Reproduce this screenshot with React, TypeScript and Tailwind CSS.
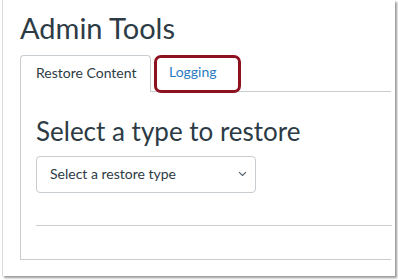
import React from "react";

export default function App() {
  return (
    <div className="w-[398px] h-[280px] bg-white font-['Lato','Noto_Sans',sans-serif] text-[#2d3b45]">
      <div className="ml-[2px] w-[393px] h-[276px] border-l border-[#dadada] bg-white overflow-hidden shadow-[2px_2px_2px_rgba(0,0,0,0.4)]">
        <div className="pl-[17px] pt-[11px]">
          <h1 className="text-[29px] leading-[1.2] font-normal">Admin Tools</h1>
          <div className="mt-[9px] relative flex w-[371px] h-[37px]">
            <div className="w-[131px] h-[37px] border-l border-t border-r border-[#c7cdd1] rounded-t-[4px] flex items-center pl-[15px] text-[14px] leading-[1.2] bg-white">
              Restore Content
            </div>
            <div className="flex-1 h-[37px] border-b border-[#c7cdd1] flex items-center pl-[18px] text-[14px] leading-[1.2] text-[#2a7bc0]">
              Logging
            </div>
            <div className="absolute left-[134px] top-0 w-[87px] h-[38px] border-[3px] border-[#8e1120] rounded-[7px]"></div>
          </div>
          <div className="w-[371px] h-[168px] border-l border-b border-[#c7cdd1] pl-[15px] pt-[24px]">
            <h2 className="text-[26px] leading-[1.2] font-normal">Select a type to restore</h2>
            <div className="mt-[9px] w-[220px] h-[37px] border border-[#c7cdd1] rounded-[4px] flex items-center justify-between pl-[13px] pr-[8px] text-[14px] leading-[1.2]">
              <span>Select a restore type</span>
              <svg width="9" height="6" viewBox="0 0 9 6" fill="none">
                <path d="M1 1.2 L4.5 4.5 L8 1.2" stroke="#4a5a66" strokeWidth="1.1" />
              </svg>
            </div>
            <div className="mt-[32px] w-[356px] border-t border-[#c7cdd1]"></div>
          </div>
        </div>
      </div>
    </div>
  );
}
